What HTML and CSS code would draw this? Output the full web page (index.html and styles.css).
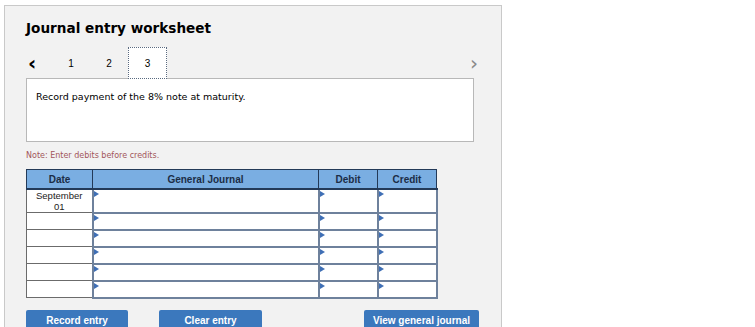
FILE: index.html
```html
<!DOCTYPE html>
<html lang="en">
<head>
    <meta charset="UTF-8">
    <title>Journal entry worksheet</title>
    <link rel="stylesheet" href="styles.css">
</head>
<body>
    <div class="painel">
        <h2 class="titulo">Journal entry worksheet</h2>

        <div class="abas">
            <span class="seta">&lsaquo;</span>
            <span class="aba">1</span>
            <span class="aba">2</span>
            <span class="aba ativa">3</span>
            <span class="seta direita">&rsaquo;</span>
        </div>

        <div class="descricao">Record payment of the 8% note at maturity.</div>

        <p class="nota">Note: Enter debits before credits.</p>

        <table class="diario">
            <tr>
                <th class="c-data">Date</th>
                <th class="c-conta">General Journal</th>
                <th class="c-valor">Debit</th>
                <th class="c-valor">Credit</th>
            </tr>
            <tr class="primeira">
                <td class="data">September<br>01</td>
                <td class="campo"></td>
                <td class="campo"></td>
                <td class="campo"></td>
            </tr>
            <tr><td class="data"></td><td class="campo"></td><td class="campo"></td><td class="campo"></td></tr>
            <tr><td class="data"></td><td class="campo"></td><td class="campo"></td><td class="campo"></td></tr>
            <tr><td class="data"></td><td class="campo"></td><td class="campo"></td><td class="campo"></td></tr>
            <tr><td class="data"></td><td class="campo"></td><td class="campo"></td><td class="campo"></td></tr>
            <tr><td class="data"></td><td class="campo"></td><td class="campo"></td><td class="campo"></td></tr>
        </table>

        <div class="botoes">
            <button type="button" class="b-registrar">Record entry</button>
            <button type="button" class="b-limpar">Clear entry</button>
            <button type="button" class="b-ver">View general journal</button>
        </div>
    </div>
</body>
</html>
```

FILE: styles.css
```css
body {
    margin: 0;
    padding: 0;
    background-color: #ffffff;
    font-family: "DejaVu Sans", Verdana, sans-serif;
    color: #000000;
}

.painel {
    margin-top: 5px;
    margin-left: 4px;
    width: 475px;
    height: 340px;
    padding: 0 0 0 21px;
    background-color: #f2f2f2;
    border: 1px solid #c9c9c9;
}

.titulo {
    margin: 0;
    padding-top: 14px;
    font-size: 13.6px;
    font-weight: bold;
    height: 27px;
}

.abas {
    display: flex;
    align-items: center;
    height: 32px;
    font-size: 10px;
}

.seta {
    width: 24px;
    padding-left: 2px;
    font-size: 20px;
    line-height: 20px;
    font-weight: bold;
    color: #000000;
}

.seta.direita {
    width: auto;
    margin-left: auto;
    margin-right: 23px;
    font-weight: normal;
    color: #8a8a8a;
}

.aba {
    width: 38px;
    height: 32px;
    display: flex;
    align-items: center;
    justify-content: center;
    font-family: "Liberation Sans", Arial, sans-serif;
    box-sizing: border-box;
}

.aba.ativa {
    width: 39px;
    background-color: #ffffff;
    border: 1px dotted #5a6a80;
    position: relative;
    z-index: 1;
}

.descricao {
    width: 437px;
    height: 62px;
    margin-top: -1px;
    padding-left: 9px;
    background-color: #ffffff;
    border: 1px solid #b8b8b8;
    font-size: 9.5px;
    line-height: 12px;
}

.descricao::before {
    content: "";
    display: block;
    height: 12px;
}

.nota {
    margin: 8px 0 0 0;
    font-size: 8px;
    color: #a2565a;
    height: 12px;
    line-height: 12px;
}

.diario {
    margin-top: 7px;
    border-collapse: collapse;
    font-family: "Liberation Sans", Arial, sans-serif;
    font-size: 10px;
}

.diario th {
    height: 18px;
    padding: 0;
    background-color: #7aaee2;
    color: #1c2d46;
    border: 1px solid #233a58;
    border-bottom: 2px solid #233a58;
    font-weight: bold;
}

.c-data {
    width: 65px;
}

.c-conta {
    width: 225px;
}

.c-valor {
    width: 58px;
}

.diario td {
    height: 15px;
    padding: 0;
    background-color: #ffffff;
}

.diario tr.primeira td {
    height: 20px;
}

.data {
    border: 1px solid #6b6b6b;
    text-align: center;
    vertical-align: top;
    line-height: 11px;
    font-size: 9.5px;
    color: #222222;
}

.campo {
    border: 2px solid #6e819c;
    position: relative;
}

.campo::before {
    content: "";
    position: absolute;
    left: 0;
    top: 1px;
    border-left: 5px solid #3f6fb5;
    border-top: 3px solid transparent;
    border-bottom: 3px solid transparent;
}

.botoes {
    display: flex;
    margin-top: 11px;
}

.botoes button {
    height: 22px;
    border: 0;
    outline: none;
    border-radius: 2px;
    background-color: #3b78bd;
    color: #ffffff;
    font-family: "Liberation Sans", Arial, sans-serif;
    font-weight: bold;
    font-size: 10px;
    padding: 0;
}

.b-registrar {
    width: 102px;
}

.b-limpar {
    width: 103px;
    margin-left: 31px;
}

.b-ver {
    width: 115px;
    margin-left: 102px;
}
```
